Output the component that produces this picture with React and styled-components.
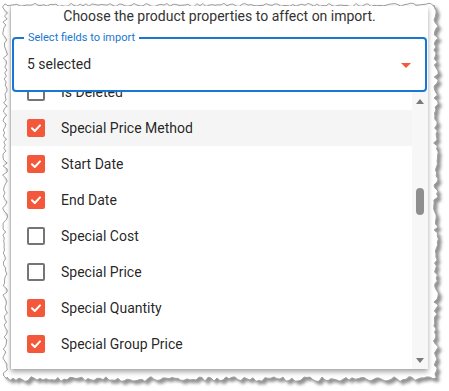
import React from "react";
import styled, { createGlobalStyle } from "styled-components";

const GlobalStyle = createGlobalStyle`
  html, body { margin: 0; padding: 0; background: #ffffff; }
  body { font-family: Roboto, "Noto Sans", "Liberation Sans", sans-serif; }
  * { box-sizing: border-box; }
`;

const ORANGE = "#f4583b";
const BLUE = "#1976d2";

const Frame = styled.div`
  position: relative;
  width: 449px;
  height: 391px;
  padding: 6px 21px 22px 11px;
  overflow: hidden;
`;

const EdgeSvg = styled.svg`
  position: absolute;
  left: 0;
  top: 0;
  z-index: 0;
`;

const Panel = styled.div`
  position: relative;
  z-index: 1;
  width: 417px;
  height: 363px;
  background: #ffffff;
  box-shadow: 0 3px 5px rgba(0, 0, 0, 0.35), -1px 0 1px rgba(0, 0, 0, 0.12);
  display: flex;
  flex-direction: column;
  overflow: hidden;
`;

const Title = styled.div`
  height: 31px;
  line-height: 20px;
  text-align: center;
  font-size: 14px;
  color: #333333;
`;

const SelectBox = styled.div`
  position: relative;
  margin: 0 1px;
  height: 55px;
  flex: none;
  border: 2px solid ${BLUE};
  border-radius: 4px;
  display: flex;
  align-items: center;
  justify-content: space-between;
  padding: 0 14px 1px 13px;
  z-index: 2;
  background: #fff;
`;

const Legend = styled.span`
  position: absolute;
  top: -8px;
  left: 10px;
  padding: 0 4px;
  background: #ffffff;
  font-size: 11px;
  line-height: 13px;
  color: ${BLUE};
`;

const Value = styled.span`
  font-size: 14px;
  color: rgba(0, 0, 0, 0.87);
`;

const Caret = styled.span`
  width: 0;
  height: 0;
  border-left: 5px solid transparent;
  border-right: 5px solid transparent;
  border-top: 5px solid ${ORANGE};
  margin-top: 2px;
`;

const Body = styled.div`
  flex: 1;
  display: flex;
  min-height: 0;
  overflow: hidden;
`;

const Viewport = styled.div`
  flex: 1;
  overflow: hidden;
`;

const List = styled.ul`
  list-style: none;
  margin: -18px 0 0 0;
  padding: 0;
`;

const Row = styled.li`
  height: 36px;
  display: flex;
  align-items: center;
  padding-left: 16px;
  background: ${(p) => (p.$hover ? "#f5f5f5" : "transparent")};
  font-size: 14px;
  color: rgba(0, 0, 0, 0.87);
`;

const Box = styled.span`
  width: 18px;
  height: 18px;
  border-radius: 2px;
  margin-right: 16px;
  flex: none;
  display: flex;
  align-items: center;
  justify-content: center;
  background: ${(p) => (p.$checked ? ORANGE : "transparent")};
  border: ${(p) => (p.$checked ? "none" : "2px solid #757575")};
`;

const Scrollbar = styled.div`
  width: 16px;
  background: #f7f7f7;
  display: flex;
  flex-direction: column;
  align-items: center;
`;

const ArrowCell = styled.div`
  height: 16px;
  width: 16px;
  display: flex;
  align-items: center;
  justify-content: center;
`;

const Arrow = styled.span`
  width: 0;
  height: 0;
  border-left: 4.5px solid transparent;
  border-right: 4.5px solid transparent;
  ${(p) =>
    p.$up
      ? "border-bottom: 5px solid #7a7a7a; margin-top: 3px;"
      : "border-top: 5px solid #7a7a7a; margin-top: -1px;"}
`;

const Track = styled.div`
  flex: 1;
  width: 100%;
  display: flex;
  flex-direction: column;
  align-items: center;
`;

const Thumb = styled.div`
  width: 8px;
  height: 27px;
  border-radius: 4px;
  background: #8f8f8f;
`;

const Check = () => (
  <svg width="12" height="12" viewBox="0 0 12 12">
    <path d="M2 6.3 L4.8 9 L10 3.4" fill="none" stroke="#fff" strokeWidth="2" strokeLinecap="round" strokeLinejoin="round" />
  </svg>
);

const items = [
  { label: "Is Deleted", checked: false },
  { label: "Special Price Method", checked: true, hover: true },
  { label: "Start Date", checked: true },
  { label: "End Date", checked: true },
  { label: "Special Cost", checked: false },
  { label: "Special Price", checked: false },
  { label: "Special Quantity", checked: true },
  { label: "Special Group Price", checked: true },
];

function rnd(i) {
  const x = Math.sin(i * 12.9898 + 78.233) * 43758.5453;
  return x - Math.floor(x);
}

function tornPath(x0, y0, x1, y1) {
  const pts = [];
  let k = 0;
  const step = 3;
  for (let x = x0; x < x1; x += step) pts.push([x, y0 + (rnd(k++) - 0.5) * 3.5]);
  for (let y = y0; y < y1; y += step) pts.push([x1 + (rnd(k++) - 0.5) * 5, y]);
  for (let x = x1; x > x0; x -= step) pts.push([x, y1 + (rnd(k++) - 0.5) * 5]);
  for (let y = y1; y > y0; y -= step) pts.push([x0 + (rnd(k++) - 0.5) * 5, y]);
  return "M" + pts.map((p) => p[0].toFixed(1) + " " + p[1].toFixed(1)).join(" L") + " Z";
}

const TornEdge = () => {
  const d = tornPath(5, 5, 436, 379);
  return (
    <EdgeSvg width="449" height="391" viewBox="0 0 449 391">
      <defs>
        <filter id="sh" x="-5%" y="-5%" width="110%" height="110%">
          <feDropShadow dx="3" dy="3" stdDeviation="1.8" floodColor="#808080" floodOpacity="0.85" />
        </filter>
      </defs>
      <path d={d} fill="#ffffff" stroke="#a0a0a0" strokeWidth="1" filter="url(#sh)" />
    </EdgeSvg>
  );
};

export default function App() {
  return (
    <>
      <GlobalStyle />
      <Frame>
        <TornEdge />
        <Panel>
          <Title>Choose the product properties to affect on import.</Title>
          <SelectBox>
            <Legend>Select fields to import</Legend>
            <Value>5 selected</Value>
            <Caret />
          </SelectBox>
          <Body>
            <Viewport>
              <List>
                {items.map((it) => (
                  <Row key={it.label} $hover={it.hover}>
                    <Box $checked={it.checked}>{it.checked && <Check />}</Box>
                    {it.label}
                  </Row>
                ))}
              </List>
            </Viewport>
            <Scrollbar>
              <ArrowCell>
                <Arrow $up />
              </ArrowCell>
              <Track>
                <Thumb style={{ marginTop: 80 }} />
              </Track>
              <ArrowCell>
                <Arrow />
              </ArrowCell>
            </Scrollbar>
          </Body>
        </Panel>
      </Frame>
    </>
  );
}
